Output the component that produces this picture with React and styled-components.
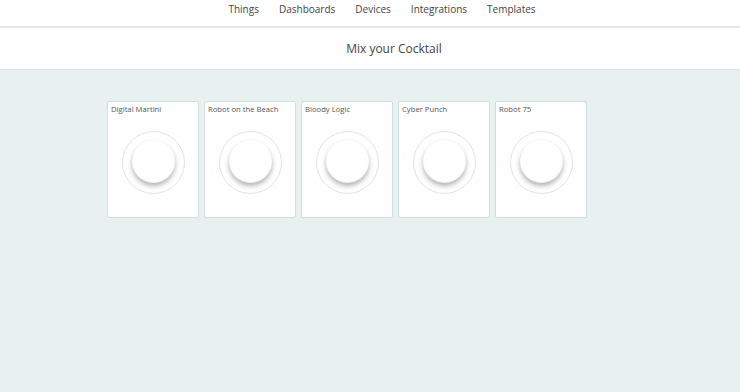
import React from 'react';
import styled, {createGlobalStyle} from 'styled-components';

const Global = createGlobalStyle`
  html, body {
    margin: 0;
    padding: 0;
    height: 100%;
    background: #e9f0f0;
    font-family: "Open Sans", "Noto Sans", sans-serif;
    color: #444;
  }
  #root {
    min-height: 100%;
  }
`;

const Page = styled.div`
  min-height: 392px;
  background: #e9f0f0;
`;

const NavBar = styled.nav`
  height: 26px;
  background: #fff;
  border-bottom: 2px solid #e4e6e6;
  display: flex;
  justify-content: center;
  align-items: flex-start;
  gap: 20px;
  padding: 2px 0 0 24px;
  box-sizing: border-box;
  height: 28px;
`;

const NavItem = styled.a`
  font-size: 10px;
  line-height: 14px;
  color: #444;
  text-decoration: none;
  cursor: pointer;
`;

const Header = styled.header`
  height: 41px;
  background: #fff;
  border-bottom: 1px solid #dde6e6;
  display: flex;
  align-items: center;
  justify-content: center;
  padding-left: 48px;
`;

const Title = styled.h1`
  margin: 0;
  font-size: 12px;
  font-weight: 400;
  color: #444;
`;

const Grid = styled.div`
  display: flex;
  gap: 5px;
  padding: 31px 0 0 107px;
`;

const Card = styled.div`
  width: 90px;
  height: 115px;
  background: #fff;
  border: 1px solid #cfe0de;
  border-radius: 2px;
  display: flex;
  flex-direction: column;
`;

const Label = styled.div`
  font-size: 7.7px;
  color: #555;
  padding: 2px 3px 0;
  line-height: 11px;
`;

const Dial = styled.div`
  margin: 16px auto 0;
  width: 61px;
  height: 61px;
  border-radius: 50%;
  border: 1px solid #dbe7e5;
  display: flex;
  align-items: center;
  justify-content: center;
`;

const Knob = styled.button`
  width: 43px;
  height: 43px;
  border-radius: 50%;
  border: none;
  background: #fff;
  padding: 0;
  margin-top: -2px;
  box-shadow: 0 3px 5px rgba(0, 0, 0, 0.3), inset 0 -1px 2px rgba(0, 0, 0, 0.05);
  cursor: pointer;
`;

const nav = ['Things', 'Dashboards', 'Devices', 'Integrations', 'Templates'];
const cocktails = ['Digital Martini', 'Robot on the Beach', 'Bloody Logic', 'Cyber Punch', 'Robot 75'];

const App = () => {
    return (
        <>
            <Global/>
            <Page>
                <NavBar>
                    {nav.map(n => <NavItem key={n}>{n}</NavItem>)}
                </NavBar>
                <Header>
                    <Title>Mix your Cocktail</Title>
                </Header>
                <Grid>
                    {cocktails.map(c => (
                        <Card key={c}>
                            <Label>{c}</Label>
                            <Dial>
                                <Knob aria-label={c}/>
                            </Dial>
                        </Card>
                    ))}
                </Grid>
            </Page>
        </>
    );
};

export default App;
